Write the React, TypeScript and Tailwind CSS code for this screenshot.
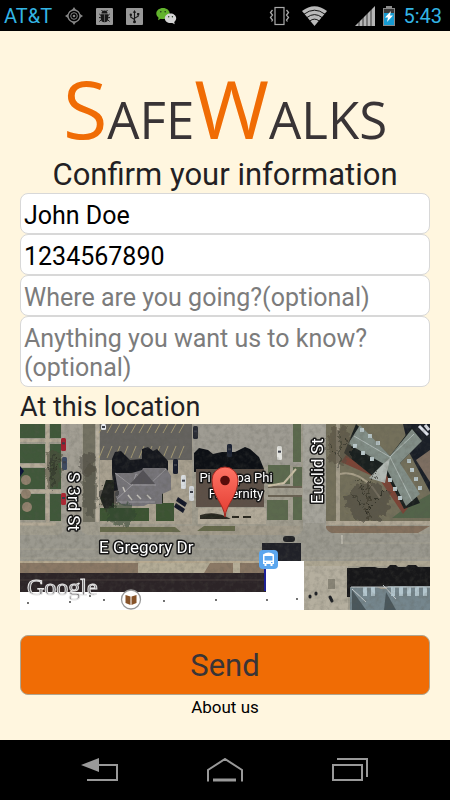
import React, { useState } from "react";

const LOT_LINES = [84, 92, 100, 108, 116, 124, 132, 140, 148, 156, 164];
const DORMERS = [
  [340, 4], [348, 10], [356, 17], [333, 20], [341, 27], [350, 33],
  [387, 35], [390, 44], [394, 53], [398, 62], [368, 54], [373, 63], [378, 72],
];
const SOUTH_DORMERS = [343, 351, 371, 379, 387, 395, 403];
const ROOF_SPECKS = [
  [8, 179], [50, 178], [70, 172], [84, 176], [144, 177], [196, 176], [247, 176], [277, 175],
];

const TREES = [
  { x: 33, y: 45, rx: 8, ry: 20, fill: "#4b4b3a" },
  { x: 67, y: 40, rx: 8, ry: 12, fill: "#4a4740" },
  { x: 70, y: 66, rx: 7, ry: 28, fill: "#4f4f41" },
  { x: 89, y: 72, rx: 8, ry: 14, fill: "#20221d" },
  { x: 101, y: 90, rx: 15, ry: 11, fill: "#30452d" },
  { x: 319, y: 22, rx: 12, ry: 20, fill: "#55503f" },
  { x: 348, y: 78, rx: 22, ry: 20, fill: "#474438" },
];

const CARS = [
  { x: 41, y: 14, w: 5, h: 13, fill: "#a51f2e" },
  { x: 42, y: 33, w: 5, h: 13, fill: "#3b4963" },
  { x: 41, y: 69, w: 5, h: 12, fill: "#b02532" },
  { x: 81, y: 0, w: 5, h: 6, fill: "#e8ebf2" },
  { x: 153, y: 35, w: 5, h: 15, fill: "#171c2c" },
  { x: 161, y: 51, w: 5, h: 14, fill: "#d9dde0" },
  { x: 169, y: 62, w: 5, h: 15, fill: "#d2d6da" },
  { x: 207, y: 20, w: 5, h: 13, fill: "#1b2233" },
  { x: 257, y: 22, w: 5, h: 14, fill: "#e4e4df" },
  { x: 173, y: 2, w: 5, h: 13, fill: "#272a33" },
];

function TargetIcon() {
  return (
    <svg className="h-[18px] w-[18px]" viewBox="0 0 18 18" fill="none" stroke="#858585">
      <path d="M9 0l2 3H7zM9 18l2-3H7zM0 9l3-2v4zM18 9l-3-2v4z" fill="#858585" stroke="none" />
      <circle cx="9" cy="9" r="6" strokeWidth="1.3" />
      <circle cx="9" cy="9" r="3.3" />
      <circle cx="9" cy="9" r="1.3" fill="#858585" stroke="none" />
    </svg>
  );
}

function BugIcon() {
  return (
    <svg className="h-[17px] w-[17px]" viewBox="0 0 17 17">
      <rect width="17" height="17" rx="1" fill="#989898" />
      <path d="M5.5 5.5a3 3 0 0 1 6 0zM4.8 6.3h7.4v4.2a3.7 3.7 0 0 1-7.4 0z" fill="#171717" />
      <path d="M6.5 3.2L5.5 2M10.5 3.2l1-1.2M5 7.5L3.3 6M4.8 9.6H3M5 12l-1.6 1.5M12 7.5L13.7 6M12.2 9.6H14M12 12l1.6 1.5" stroke="#171717" />
      <path d="M8.5 6.3v7.5" stroke="#777" strokeWidth=".7" />
    </svg>
  );
}

function UsbIcon() {
  return (
    <svg className="h-[17px] w-[17px]" viewBox="0 0 17 17">
      <rect width="17" height="17" rx="1" fill="#989898" />
      <path d="M8.5 4v9M8.5 11.5L4.8 9.3V6.8M8.5 10.2l3.7-2V6.2" fill="none" stroke="#171717" strokeWidth="1.1" />
      <path d="M8.5 2l1.7 2.7H6.8z" fill="#171717" />
      <circle cx="8.5" cy="13.7" r="1.5" fill="#171717" />
      <circle cx="4.8" cy="6.7" r="1.2" fill="#171717" />
      <rect x="11.1" y="5" width="2.2" height="2.2" fill="#171717" />
    </svg>
  );
}

function ChatIcon() {
  return (
    <svg className="h-[18px] w-[21px]" viewBox="0 0 21 18">
      <path d="M7 1c3.7 0 6.7 2.4 6.7 5.5S10.7 12 7 12c-.8 0-1.6-.1-2.3-.3L2 13.2l.6-2.5C1.2 9.7.3 8.2.3 6.5.3 3.4 3.3 1 7 1z" fill="#62b32d" />
      <path d="M14.5 6.5c3.2 0 5.7 2.1 5.7 4.8 0 1.5-.8 2.8-2 3.7l.5 2.2-2.4-1.3c-.6.2-1.2.2-1.8.2-3.2 0-5.7-2.1-5.7-4.8s2.5-4.8 5.7-4.8z" fill="#d4d4d4" />
      <g fill="#20351a">
        <circle cx="4.8" cy="4.8" r=".8" />
        <circle cx="9.2" cy="4.8" r=".8" />
        <circle cx="12.7" cy="9.8" r=".7" />
        <circle cx="16.4" cy="9.8" r=".7" />
      </g>
    </svg>
  );
}

function VibrateIcon() {
  return (
    <svg className="h-[20px] w-[21px]" viewBox="0 0 21 20" fill="none" stroke="#a9a9a9">
      <rect x="6" y="1.5" width="9" height="17" strokeWidth="1.2" />
      <path d="M3.5 4L1.5 6.5 3.5 9l-2 2.5 2 2.5-1 1.5M17.5 4l2 2.5-2 2.5 2 2.5-2 2.5 1 1.5" strokeWidth="1.3" />
    </svg>
  );
}

function WifiIcon() {
  return (
    <svg className="h-[20px] w-[25px]" viewBox="0 0 25 20">
      <path d="M12.5 20L0 5Q12.5-4.5 25 5z" fill="#b9b9b9" />
      <path d="M2 8.2q10.5-8 21 0M4.8 11.6q7.7-6 15.4 0M7.8 15q4.7-3.7 9.4 0" fill="none" stroke="#000" strokeWidth=".9" />
    </svg>
  );
}

function SignalIcon() {
  return (
    <svg className="h-[20px] w-[20px]" viewBox="0 0 20 20">
      <path d="M0 20L20 0v20z" fill="#b5b5b5" />
      <path d="M4 0v20M8 0v20M12 0v20M16 0v20" stroke="#000" strokeWidth=".7" />
    </svg>
  );
}

function BatteryIcon() {
  return (
    <svg className="h-[20px] w-[12px]" viewBox="0 0 12 20">
      <path d="M3 0h6v2h3v18H0V2h3z" fill="#8a8a8a" />
      <path d="M1 3h10v4H1z" fill="#3b3b3b" />
      <path d="M1 7h10v12H1z" fill="#169bd2" />
      <path d="M8 5L2 11.5h3L4 16l6-6.5H7z" fill="#fff" />
    </svg>
  );
}

function StatusBar() {
  return (
    <header className="flex h-[31px] items-center justify-between bg-black pt-px pr-2 pl-1 text-[20px] leading-none text-[#33b5e5]">
      <div className="flex items-center gap-[13px]">
        <span>AT&amp;T</span>
        <TargetIcon />
        <BugIcon />
        <UsbIcon />
        <ChatIcon />
      </div>
      <div className="flex items-center gap-2">
        <VibrateIcon />
        <div className="mx-1"><WifiIcon /></div>
        <div className="ml-4"><SignalIcon /></div>
        <BatteryIcon />
        <time>5:43</time>
      </div>
    </header>
  );
}

function LocationMap() {
  return (
    <svg className="block h-auto w-full" viewBox="0 0 410 186" role="img" aria-label="Map of this location">
      <defs>
        <filter id="grain" x="0" y="0" width="100%" height="100%">
          <feTurbulence type="fractalNoise" baseFrequency="0.2" numOctaves="3" seed="4" />
          <feColorMatrix values="0 0 0 0 0.1  0 0 0 0 0.1  0 0 0 0 0.08  1.6 0 0 0 -0.65" />
          <feComposite in2="SourceGraphic" operator="in" />
        </filter>
        <filter id="rough" x="-20%" y="-20%" width="140%" height="140%">
          <feTurbulence type="fractalNoise" baseFrequency="0.18" numOctaves="3" seed="8" />
          <feDisplacementMap in="SourceGraphic" scale="12" xChannelSelector="R" yChannelSelector="G" />
        </filter>
        <linearGradient id="pin" x1="0" y1="0" x2="0" y2="1">
          <stop offset="0" stopColor="#ff7465" />
          <stop offset="1" stopColor="#e23b30" />
        </linearGradient>
      </defs>

      <rect width="410" height="186" fill="#a19d8f" />

      {/* lawns west of 3rd */}
      <path d="M0 0h25v14H0zM30 0h11v14H30zM0 20h25v19H0zM30 20h11v45H30zM0 44h25v21H0zM0 70h25v26H0zM30 70h11v27H30z" fill="#40583a" />
      <path d="M0 16.5h41M0 41.5h27M0 67.5h41M27.5 0v98M0 100h36" stroke="#b5ab98" strokeWidth="3" />
      <g fill="#92826e">
        <circle cx="6" cy="56" r="5" />
        <circle cx="6" cy="70" r="5" />
        <circle cx="7" cy="83" r="5" />
      </g>
      <path d="M0 42l4 5-4 6z" fill="#0c1238" />
      <path d="M42 0h20v112H42z" fill="#a39f94" />
      <path d="M63 0h12v98H63z" fill="#747263" />
      <path d="M76 0h3v98h-3z" fill="#b9b1a0" />

      {/* parking lot and house */}
      <path d="M80 0h92v36H80z" fill="#65635f" />
      <path d="M80 36h92v64H80z" fill="#a9a190" />
      <g stroke="#b5a777" strokeWidth=".8">
        {LOT_LINES.map((x) => (
          <path key={x} d={`M${x} 0l-5 9M${x} 22l-5 12`} />
        ))}
      </g>
      <path d="M92 50V35l3-7 6-1 9 9 12-1V25l6-2 5 4 4-2 11 12v9l-8 13-46 8z" fill="#15171d" />
      <path d="M86 56h8v30h-9l-5-12zM136 60h7v20l-7 13z" fill="#22271f" />
      <path d="M80 84h49v13H80zM136 79h18v18h-18z" fill="#3c5432" />
      <path d="M95 49h17l10-3 1-2h23l5 8v14l-9 4v10h-14l-4 2h-20l-8-4-1-9 3-3z" fill="#77757a" />
      <path d="M95 49l17 13 4-12 14 10 16-15M112 61h24M96 76l16-15M99 78h36" fill="none" stroke="#99979b" />
      <path d="M110 60l13-14 12 14z" fill="#545257" />
      <path d="M108 71l4 5M117 71l4 4M127 71l4 4M103 63l2 5" stroke="#c7c4bd" strokeWidth="1.5" />

      {/* fraternity block */}
      <path d="M173 0h108v42H173z" fill="#9f9c93" />
      <path d="M174 29l5-5 9 2 5 4 9-2h13l10-5 5 2 9 8 5 12v3h-70z" fill="#0d1015" />
      <path d="M176 45h68v38h-68z" fill="#5d5047" />
      <path d="M178 84h68v16h-68z" fill="#b2aa99" />
      <path d="M181 92c8-3 19-2 26 2h-26zM212 93h7M223 93h8" fill="#24271d" stroke="#29271f" strokeWidth="2" />
      <path d="M248 41h22v19h-22zM247 76h21v20h-21zM273 0h8v38h-8zM273 43h9v21h-9zM273 73h9v23h-9z" fill="#5c6a4e" />
      <path d="M248 63h34M248 72h34" stroke="#6a6253" strokeWidth="2" />
      <path d="M248 62l16-3 12-14" fill="none" stroke="#cbc0a6" strokeWidth="2" />
      <path d="M80 102h200v9H80z" fill="#a39c8c" />
      <path d="M80 103h75l6 5H80zM184 102h31v5h-38z" fill="#666a4b" />

      {/* east block */}
      <path d="M283 0h23v186h-23z" fill="#a6a49b" />
      <path d="M306 0h104v100H306z" fill="#74705b" />
      <path d="M316 0h4v98h-4z" fill="#a59e8c" />
      <path d="M306 97h104v4H306z" fill="#b0a795" />
      <path d="M306 102h104l-12 7h-92z" fill="#84705d" />
      <path d="M385 84l25-14v24h-38z" fill="#53644a" />
      <path d="M326 31l34 18-3 5-36-16zM356 50l27 40 7-9-22-40z" fill="#7c4436" />
      <path d="M320 50q17-4 33 14l7 10" fill="none" stroke="#aaa18b" strokeWidth="2" />
      <path d="M383 0h27v68l-20-38z" fill="#1a1f27" />
      <path d="M410 26v32l-14-22z" fill="#7e6f62" />
      <path d="M336 0l34 32L392 3l10 14-22 22 20 40-16 6-19-37-10 6-31-25z" fill="#1a201f" />
      <path d="M340 1l30 31L392 5l10 12-22 22 20 31-14 12-22-42-36-20z" fill="#828e87" />
      <path d="M370 33L334 12M370 33l24-23M370 33l22 44" stroke="#b0bab6" />
      <path d="M349 54l14-14 7-6-5 25z" fill="#b2b9b4" />
      <g fill="#b9c7c9">
        {DORMERS.map(([x, y]) => (
          <rect key={`${x}-${y}`} x={x} y={y} width="4" height="4" />
        ))}
      </g>
      <path d="M399 2l9 9M405 1l4 5" stroke="#dfe3ec" strokeWidth="3" />

      {/* E Gregory Dr */}
      <path d="M0 111h38q8-3 8-10h14q0 8 8 10h208q8-2 9-12h20q0 10 12 11h93v28H0z" fill="#9b998f" />
      <path d="M0 125h280M322 119h88M0 134h410" stroke="#aaa594" strokeWidth=".8" />
      <path d="M322 111v9" stroke="#d8d4c8" />
      <path d="M0 138h284v11H0z" fill="#8a7865" />
      <path d="M0 138h284" stroke="#b7aa91" strokeWidth="2" />
      <path d="M118 139h72l-6 10h-66zM213 139h7v10h-7z" fill="#b5ad97" />
      <path d="M0 149h246v20H0z" fill="#2c2427" />
      <path d="M0 156h246" stroke="#443a3a" />
      <path d="M0 168h246v-31h38v49H0z" fill="#fff" />
      <path d="M245 145v22" fill="none" stroke="#1c1f9a" strokeWidth="2" />
      <path d="M242 119h39v18h-39z" fill="#202128" />
      <rect x="263" y="112" width="12" height="6" rx="3" fill="#202124" />
      <g fill="#303030">
        {ROOF_SPECKS.map(([x, y]) => (
          <circle key={x} cx={x} cy={y} r=".9" />
        ))}
      </g>

      {/* south east building */}
      <path d="M284 137h44v49h-44z" fill="#b5af9f" />
      <path d="M284 137h126v5H284z" fill="#aea793" />
      <path d="M308 155h7v10h-7z" fill="#898577" />
      <path d="M290 172v1M296 169v1M310 173l2 4" stroke="#1e2024" strokeWidth="3" strokeLinecap="round" />
      <path d="M327 144h11l3-1h14l3 1h9l3-3h6l2 2h8l2-2h8l2 2h12v20h-80v10h-3z" fill="#171719" />
      <path d="M330 163h27l4 2h5l2-3h42v24h-80z" fill="#75868d" />
      <path d="M331 163h79M332 165l14 13M363 161l13 14" stroke="#c8ced0" />
      <path d="M332 166l14 20h-14zM366 168l10 18h-12z" fill="#4a575c" />
      <g fill="#b3c6ce">
        {SOUTH_DORMERS.map((x) => (
          <rect key={x} x={x} y="163" width="4" height="9" />
        ))}
      </g>

      {CARS.map((c) => (
        <g key={`${c.x}-${c.y}`}>
          <rect x={c.x} y={c.y} width={c.w} height={c.h} rx="1.5" fill={c.fill} />
          <rect x={c.x + 1} y={c.y + c.h / 3} width={c.w - 2} height="2" fill="#3b3e48" />
        </g>
      ))}
      <path d="M158 73l9 6-2 4-9-6zM156 79l9 6-2 4-9-6z" fill="#141828" />

      <g filter="url(#rough)">
        {TREES.map((t) => (
          <ellipse key={`${t.x}-${t.y}`} cx={t.x} cy={t.y} rx={t.rx} ry={t.ry} fill={t.fill} opacity=".55" />
        ))}
        <path d="M348 96V58m0 30l-18-20m18 16l18-18m-18 8l-12-20m12 14l8-20M319 46V6m0 24l-10-12m10 8l9-12M33 66V30m0 20l-8-10m8 4l7-9" fill="none" stroke="#292921" strokeWidth=".8" />
      </g>
      <path d="M0 0h410v186H284v-49H246v31H0z" fill="#000" filter="url(#grain)" opacity=".35" />

      <g className="font-[Roboto]" fill="#fff" stroke="#151515" strokeWidth="3" strokeLinejoin="round" paintOrder="stroke">
        <g fontSize="17">
          <text x="79" y="129">E Gregory Dr</text>
          <text transform="translate(48 48) rotate(90)">S 3rd St</text>
          <text transform="translate(303 80) rotate(-90)">Euclid St</text>
        </g>
        <g fontSize="13" textAnchor="middle">
          <text x="216" y="58">Pi Kappa Phi</text>
          <text x="216" y="74">Fraternity</text>
        </g>
      </g>
      <text
        x="7"
        y="171"
        fontSize="24"
        fill="#6b696c"
        stroke="#e6e6e6"
        strokeWidth="1"
        className="font-['Liberation_Serif',serif]"
      >
        Google
      </text>

      <circle cx="111" cy="175.5" r="9.5" fill="#fff" stroke="#999" strokeWidth="1.3" />
      <path d="M105.5 171l5 1.5v8.5l-5-2zM116.5 171l-5 1.5v8.5l5-2z" fill="#865329" />
      <rect x="239" y="126" width="19" height="19" rx="4" fill="#5ba6ee" />
      <path d="M243 130.5q5.500-4 11 0V140h-1.500v2h-2v-2h-4v2h-2v-2H243z" fill="#fff" />
      <path d="M244.5 132h8v4.500h-8zM244.500 138h1.500v1h-1.500zM251 138h1.500v1H251z" fill="#5ba6ee" />
      <path d="M205 93c-1-13-13-21-13-37a13 13 0 0 1 26 0c0 16-12 24-13 37z" fill="url(#pin)" stroke="#a32a22" />
      <circle cx="205" cy="56.5" r="4.8" fill="#590d0b" />
    </svg>
  );
}

function NavBar() {
  return (
    <nav className="flex h-[60px] items-center justify-between bg-black px-20">
      <button type="button" aria-label="Back">
        <svg className="h-6 w-[38px]" viewBox="0 0 38 24" fill="none" stroke="#999" strokeWidth="2">
          <path d="M18 7h19v15H7" />
          <path d="M1 7l18-7v14z" fill="#999" stroke="none" />
        </svg>
      </button>
      <button type="button" aria-label="Home">
        <svg className="h-6 w-[38px]" viewBox="0 0 38 24" fill="none" stroke="#999" strokeWidth="2">
          <path d="M2 23.5V12L19 1l17 11v11.5" />
          <path d="M7 22h23" strokeWidth="3" />
        </svg>
      </button>
      <button type="button" aria-label="Recent apps">
        <svg className="h-6 w-[38px]" viewBox="0 0 38 24" fill="none" stroke="#999" strokeWidth="2">
          <path d="M1 7h29v15H1z" />
          <path d="M5 1h30v18" />
        </svg>
      </button>
    </nav>
  );
}

export default function App() {
  const [name, setName] = useState("John Doe");
  const [phone, setPhone] = useState("1234567890");
  const [destination, setDestination] = useState("");
  const [notes, setNotes] = useState("");

  const field =
    "block w-full rounded-lg border border-[#d8d8d8] bg-white px-[3px] text-[25px] text-black placeholder:text-[#7c7c7c] placeholder:opacity-100";

  return (
    <div className="flex min-h-screen flex-col bg-[#fff6df] font-[Roboto,sans-serif]">
      <StatusBar />
      <main className="flex-1 px-5 pt-10 text-[#231f24]">
        <div className="text-center font-['Open_Sans',sans-serif] text-[51px] leading-[74px] whitespace-nowrap text-[#393436]">
          <span className="text-[81px] text-[#f06c05]">S</span>AFE
          <span className="text-[81px] text-[#f06c05]">W</span>ALKS
        </div>
        <h1 className="text-center text-[31px] leading-[37px]">Confirm your information</h1>
        <form onSubmit={(e) => e.preventDefault()}>
          <input
            aria-label="Name"
            className={`${field} h-[41px] pt-1`}
            value={name}
            onChange={(e) => setName(e.target.value)}
          />
          <input
            aria-label="Phone number"
            type="tel"
            className={`${field} h-[41px] pt-1`}
            value={phone}
            onChange={(e) => setPhone(e.target.value)}
          />
          <input
            aria-label="Destination"
            className={`${field} h-[41px] pt-1`}
            placeholder="Where are you going?(optional)"
            value={destination}
            onChange={(e) => setDestination(e.target.value)}
          />
          <textarea
            aria-label="Notes"
            rows={2}
            className={`${field} resize-none overflow-hidden pt-[7px] pb-1 leading-[29px]`}
            placeholder={"Anything you want us to know?\n(optional)"}
            value={notes}
            onChange={(e) => setNotes(e.target.value)}
          />
          <h2 className="pt-1 text-[27px] leading-[33px]">At this location</h2>
          <LocationMap />
          <button
            type="submit"
            className="mt-[25px] block h-[60px] w-full rounded-lg border border-[#b0a690] bg-[#f06c05] text-[31px] leading-none text-[#393436]"
          >
            Send
          </button>
        </form>
        <div className="text-center">
          <a href="#about" className="text-[17px] text-black">About us</a>
        </div>
      </main>
      <NavBar />
    </div>
  );
}
